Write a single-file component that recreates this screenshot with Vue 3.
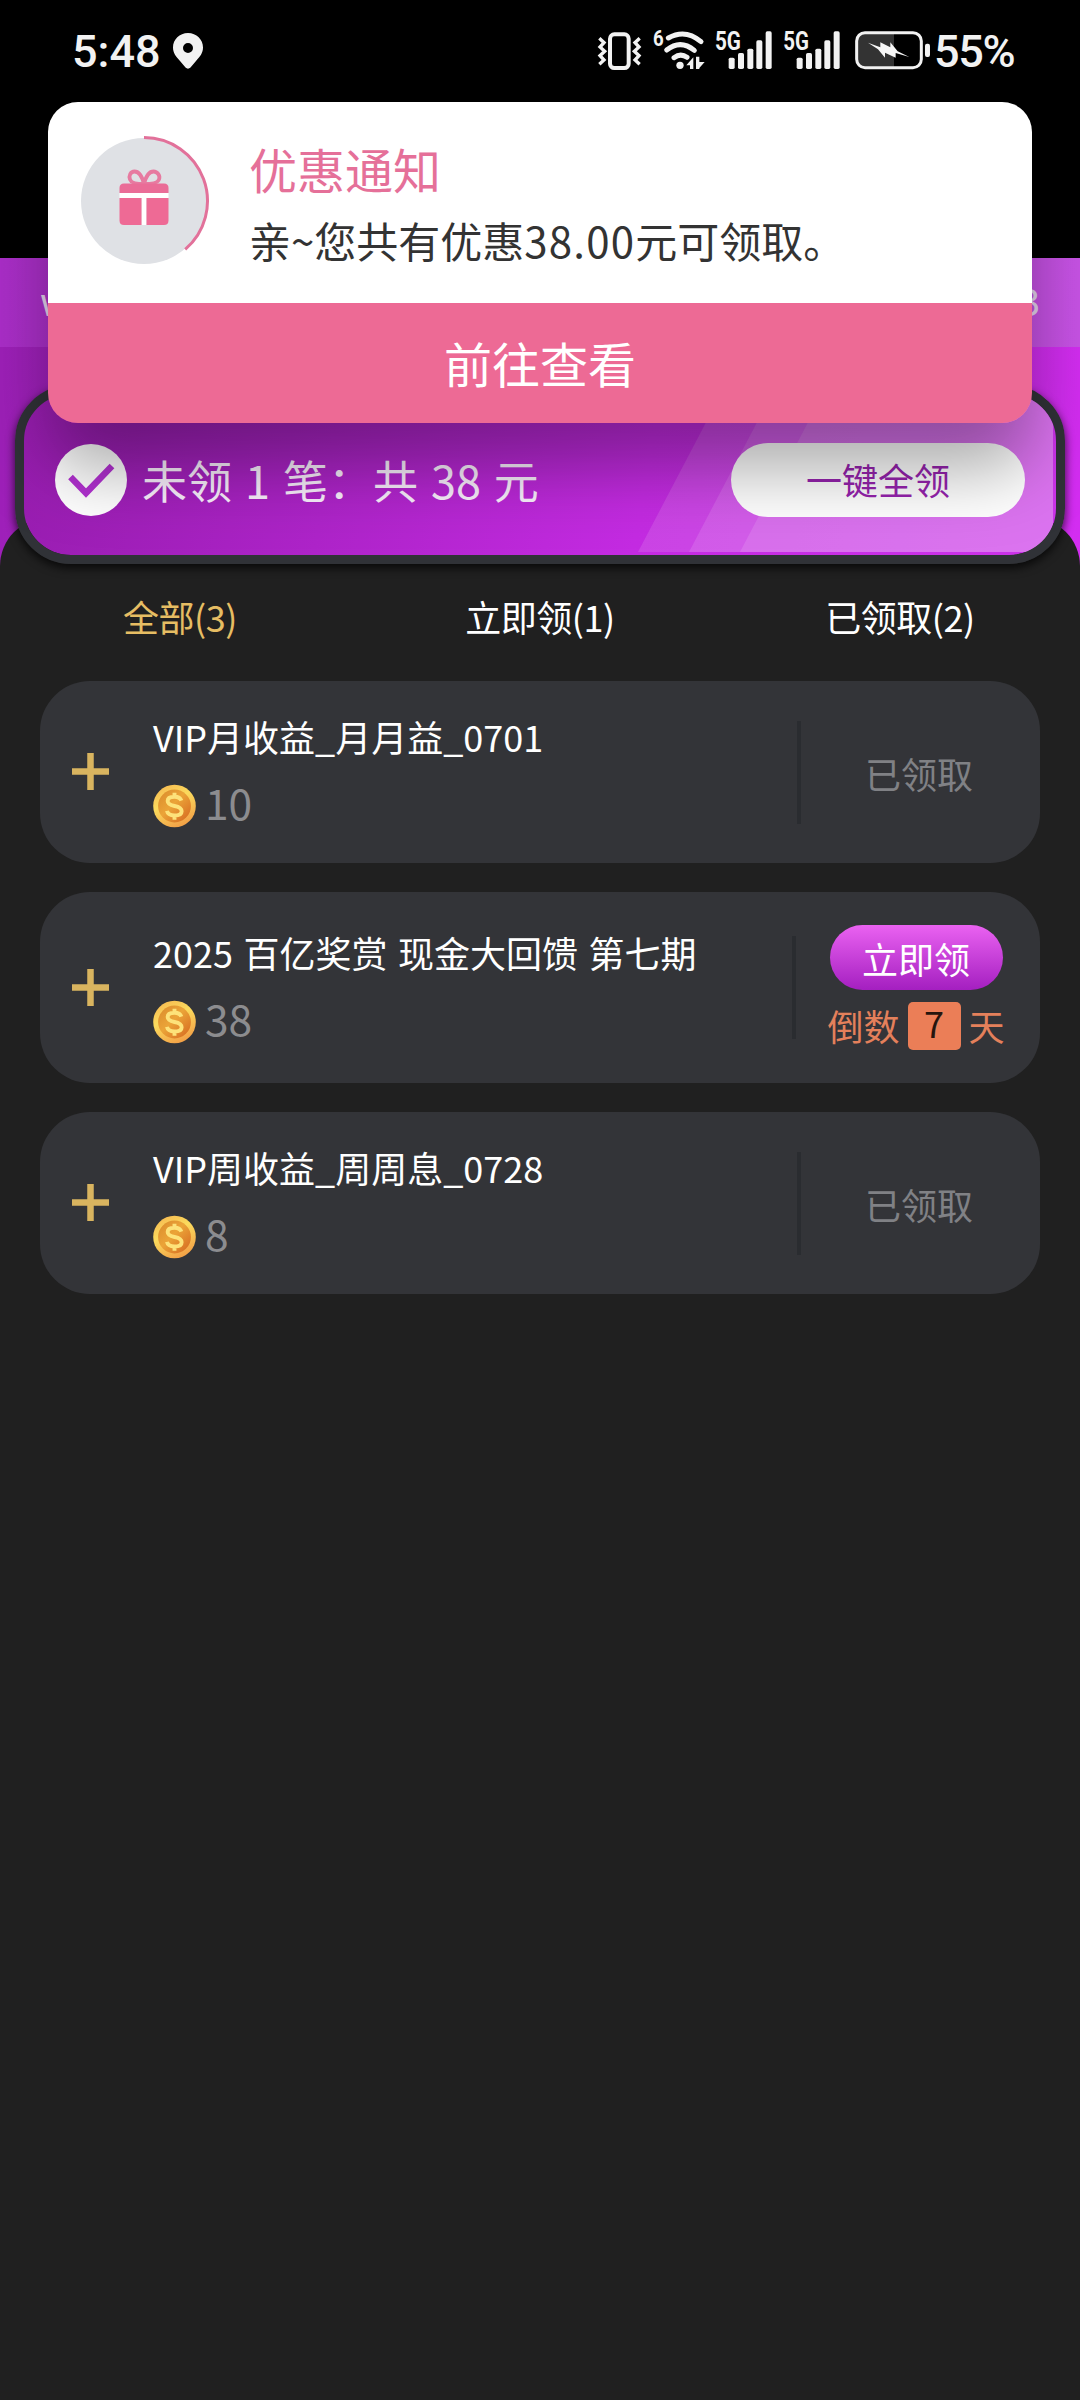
<script setup>
const tabs = [
  { label: '全部(3)', active: true },
  { label: '立即领(1)' },
  { label: '已领取(2)' },
]
const rewards = [
  { title: 'VIP月收益_月月益_0701', amount: 10, claimed: true },
  { title: '2025 百亿奖赏 现金大回馈 第七期', amount: 38, claimed: false, days: 7 },
  { title: 'VIP周收益_周周息_0728', amount: 8, claimed: true },
]
</script>

<template>
  <div class="page">
    <div class="status">
      <div class="clock">5:48</div>
      <svg class="pin" viewBox="0 0 30 36"><path fill="#f2f2f2" fill-rule="evenodd" d="M15 0C6.500 0 0 6.500 0 14.500C0 20 3 23.500 7 28L12.500 34.500Q15 36.800 17.500 34.500L23 28C27 23.500 30 20 30 14.500C30 6.500 23.500 0 15 0ZM15 10A5 5 0 1 1 15 20A5 5 0 1 1 15 10Z" /></svg>
      <svg class="sysicons" viewBox="50 55 1005 190">
        <g fill="none" stroke="#f2f2f2" stroke-width="12">
          <rect x="89" y="104" width="56" height="101" rx="13" />
          <path stroke-width="10" d="M57 116L71 129L59 142L73 155L59 168L71 181L57 194M178 116L164 129L176 142L162 155L176 168L164 181L178 194" />
          <path stroke-width="15" stroke-linecap="round" d="M264 115Q315 86 362 126M259 151Q300 118 342 152M281 174Q301 159 320 173" />
        </g>
        <g fill="#f2f2f2">
          <circle cx="299" cy="197" r="11" />
          <path d="M339 173V208H329V197H318ZM347 171V208H357V205L373 187H357V171Z" />
          <text class="net" x="218" y="139" font-size="64" textLength="32" lengthAdjust="spacingAndGlyphs">6</text>
          <text class="net" x="404" y="151" font-size="76" textLength="78" lengthAdjust="spacingAndGlyphs">5G</text>
          <text class="net" x="609" y="151" font-size="76" textLength="77" lengthAdjust="spacingAndGlyphs">5G</text>
          <g id="bars">
            <rect x="445" y="174" width="18" height="34" rx="5" />
            <rect x="473" y="160" width="18" height="48" rx="5" />
            <rect x="501" y="147" width="18" height="61" rx="5" />
            <rect x="528" y="122" width="18" height="86" rx="5" />
            <rect x="556" y="95" width="18" height="113" rx="5" />
          </g>
          <use href="#bars" x="204" />
        </g>
        <path fill="#333" d="M852 102H941V201H852Q831 201 831 180V123Q831 102 852 102Z" />
        <rect x="829" y="99" width="194" height="105" rx="25" fill="none" stroke="#f2f2f2" stroke-width="9" />
        <rect x="1034" y="132" width="15" height="40" rx="6" fill="#f2f2f2" />
        <path fill="#f7f7f7" d="M863 129L900 143V128L930 143V128L952 155L987 172L946 160V174L914 159V174L893 149Z" />
      </svg>
      <div class="percent">55%</div>
    </div>

    <div class="account"><span>w</span><span>3</span></div>

    <div class="hero">
      <div class="banner">
        <svg class="rays" viewBox="0 0 1032 162" preserveAspectRatio="none">
          <path d="M614 158L699 -4H1029V158Z" />
          <path d="M665 158L750 -4H1029V158Z" />
          <path d="M716 158L801 -4H1029V158Z" />
        </svg>
        <div class="check">
          <svg viewBox="0 0 72 72"><path d="M15.500 33L31 49L57 22" fill="none" stroke="#b331d2" stroke-width="6.500" /></svg>
        </div>
        <div class="summary">未领 1 笔：共 38 元</div>
        <button class="claim-all">一键全领</button>
      </div>
    </div>

    <main class="panel">
      <nav class="tabs">
        <div v-for="t in tabs" :key="t.label" class="tab" :class="{ active: t.active }">{{ t.label }}</div>
      </nav>
      <div class="list">
        <div v-for="r in rewards" :key="r.title" class="card" :class="{ open: !r.claimed }">
          <svg class="plus" viewBox="0 0 37 37"><path d="M0 18.500H37M18.500 0V37" stroke="#d9b45f" stroke-width="6.500" /></svg>
          <div class="info">
            <div class="title">{{ r.title }}</div>
            <div class="amount">
              <svg class="coin" viewBox="0 0 44 44">
                <defs>
                  <linearGradient id="rim" x1=".2" y1="0" x2=".7" y2="1"><stop offset="0" stop-color="#f6b951" /><stop offset=".4" stop-color="#fbdb5d" /><stop offset="1" stop-color="#f29d45" /></linearGradient>
                  <linearGradient id="face" x1="0" y1="0" x2="1" y2="1"><stop offset="0" stop-color="#d98a2b" /><stop offset=".45" stop-color="#eba438" /><stop offset="1" stop-color="#d4651f" /></linearGradient>
                </defs>
                <circle cx="22" cy="22" r="21.800" fill="url(#rim)" />
                <circle cx="22" cy="22" r="16.800" fill="url(#face)" />
                <path d="M29 16.500C28 13.500 25.500 12.500 22 12.500C17.500 12.500 15 14.300 15 17C15 20.500 18.500 21.300 22 22C26 22.800 29.300 23.800 29.300 27.300C29.300 30.200 26.500 31.700 22 31.700C18 31.700 15 30.300 14.300 27M22 8.500V12.500M22 31.500V36" fill="none" stroke="#fde27a" stroke-width="4" />
              </svg>
              <span>{{ r.amount }}</span>
            </div>
          </div>
          <div class="divider"></div>
          <div v-if="r.claimed" class="side done">已领取</div>
          <div v-else class="side">
            <button class="claim">立即领</button>
            <div class="countdown"><span>倒数</span><b>{{ r.days }}</b><span>天</span></div>
          </div>
        </div>
      </div>
    </main>

    <div class="popup">
      <div class="popup-body">
        <svg class="gift" viewBox="0 0 130 130">
          <circle cx="64" cy="66" r="63" fill="#dfe1e5" />
          <path d="M64 2.500A63.500 63.500 0 0 1 105.200 114.300" fill="none" stroke="#e2719a" stroke-width="3" />
          <path d="M64 49C62 41 59 36.500 54.500 36.500C50.500 36.500 48.500 41 50 44.500C51 47.500 54 49 64 49ZM64 49C66 41 69 36.500 73.500 36.500C77.500 36.500 80.500 41 79 44.500C78 47.500 74 49 64 49Z" fill="none" stroke="#e77aa0" stroke-width="3.800" />
          <path d="M39.500 58V53Q39.500 48.500 44 48.500H84Q88.500 48.500 88.500 53V58Z" fill="#ea6c97" />
          <path d="M39.500 58H88.500V63H66.500V90H61.500V63H39.500Z" fill="#fff" />
          <path d="M39.500 63H61.500V90H44Q39.500 90 39.500 85.500ZM66.500 63H88.500V85.500Q88.500 90 84 90H66.500Z" fill="#ee6a95" />
        </svg>
        <div class="popup-text">
          <div class="popup-title">优惠通知</div>
          <div class="popup-msg">亲~您共有优惠<span class="sum">38.00</span>元可领取。</div>
        </div>
      </div>
      <div class="popup-action">前往查看</div>
    </div>
  </div>
</template>

<style>
body { margin: 0; background: #202020; }
</style>

<style scoped>
.page {
  position: relative;
  width: 1080px;
  height: 2400px;
  overflow: hidden;
  background: #202020;
  color: #fff;
  font-family: "Noto Sans CJK SC", sans-serif;
  display: flex;
  flex-direction: column;
}
button { border: 0; padding: 0; font: inherit; }
.status {
  height: 258px;
  flex: none;
  background: #000;
  box-sizing: border-box;
  padding: 0 60px 0 72px;
  display: flex;
  align-items: flex-start;
  color: #f2f2f2;
  font-family: Roboto, sans-serif;
  font-weight: 500;
}
.clock, .percent { font-size: 45px; line-height: 104px; height: 104px; white-space: nowrap; }
.clock { width: 101px; }
.percent { letter-spacing: -1.400px; }
.pin { width: 30px; height: 36px; margin-top: 33px; }
.sysicons { width: 335px; height: 63.330px; margin-top: 18.330px; margin-left: 393.600px; margin-right: 2.500px; overflow: visible; }
.net { font-family: Roboto, sans-serif; font-weight: 700; }
.account {
  height: 89px;
  flex: none;
  box-sizing: border-box;
  display: flex;
  justify-content: space-between;
  align-items: center;
  padding: 0 40px 7px;
  font-size: 38px;
  color: #e6d5ee;
  background: linear-gradient(90deg, #ab2ec9, #c853e6);
}
.hero {
  height: 220px;
  flex: none;
  box-sizing: border-box;
  padding: 38px 15px 0;
  background: linear-gradient(90deg, #9e20b9, #d32df1);
}
.banner {
  position: relative;
  z-index: 2;
  height: 179px;
  box-sizing: border-box;
  border: 9px solid #303237;
  border-radius: 56px;
  background: linear-gradient(100deg, #981db0, #c42be2 60%, #cc33ea) padding-box;
  box-shadow: 0 4px 10px rgba(0, 0, 0, .75);
  display: flex;
  align-items: center;
  padding: 11px 31px 0;
  overflow: hidden;
}
.rays { position: absolute; inset: 0; width: 1032px; height: 162px; border-radius: 46px; }
.rays path { fill: rgba(255, 255, 255, .12); }
.check {
  position: relative;
  width: 72px;
  height: 72px;
  border-radius: 50%;
  background: #fff;
}
.check svg { display: block; width: 72px; height: 72px; }
.summary { position: relative; margin-left: 15px; padding-bottom: 1px; font-size: 45px; line-height: 66px; flex: 1; white-space: nowrap; word-spacing: 2.900px; color: #fbf0fe; }
.claim-all {
  position: relative;
  width: 294px;
  height: 74px;
  box-sizing: border-box;
  padding-bottom: 2px;
  border-radius: 37px;
  background: #fff;
  color: #9623ae;
  font-size: 36px;
  line-height: 70px;
}
.panel {
  flex: 1;
  margin-top: -49px;
  padding-top: 49px;
  background: #202020;
  border-radius: 48px 48px 0 0;
}
.tabs { display: flex; height: 100px; }
.tab { flex: 1; text-align: center; font-size: 36px; line-height: 98px; letter-spacing: -.500px; }
.tab.active { color: #e6bd63; }
.list { display: flex; flex-direction: column; gap: 29px; padding: 14px 40px; }
.card {
  height: 182px;
  box-sizing: border-box;
  border-radius: 50px;
  background: #333438;
  display: flex;
  align-items: center;
  padding-left: 32px;
}
.card.open { height: 191px; }
.plus { width: 37px; height: 37px; margin-bottom: 1px; }
.info { margin-left: 44px; flex: 1; display: flex; flex-direction: column; gap: 14px; }
.title { font-size: 36px; line-height: 50px; padding-bottom: 4px; white-space: nowrap; word-spacing: 2.500px; }
.amount { display: flex; align-items: center; height: 54px; color: #8c8c8f; font-size: 42.500px; line-height: 48px; }
.amount span { padding-bottom: 8px; }
.coin { width: 43px; height: 44px; margin-right: 9px; }
.divider { width: 4.500px; height: 103px; background: #2a2c30; }
.side { width: 236px; padding-right: 3px; display: flex; flex-direction: column; align-items: center; font-size: 36px; }
.open .side { width: 240px; padding-right: 4px; }
.side.done { color: #808185; padding-top: 2px; line-height: 54px; }
.claim {
  width: 173px;
  height: 65px;
  border-radius: 33px;
  background: linear-gradient(#ea62f1, #a41fc0);
  color: #fff;
  line-height: 64px;
}
.countdown { display: flex; align-items: center; margin-top: 12px; height: 48px; color: #e4805b; line-height: 45px; }
.countdown span { padding-bottom: 1px; }
.countdown b {
  width: 53px;
  height: 48px;
  margin: 0 8px;
  border-radius: 5px;
  background: #eb7e57;
  color: #26150e;
  font-weight: 400;
  text-align: center;
  line-height: 40px;
}
.popup {
  position: absolute;
  z-index: 5;
  left: 48px;
  top: 102px;
  width: 984px;
  height: 321px;
  border-radius: 30px;
  overflow: hidden;
  box-shadow: 0 46px 72px rgba(0, 0, 0, .34);
  display: flex;
  flex-direction: column;
}
.popup-body { height: 201px; background: #fff; display: flex; align-items: flex-start; padding-left: 32px; }
.gift { width: 130px; height: 130px; margin-top: 33px; }
.popup-text { margin: 30px 0 0 39px; display: flex; flex-direction: column; }
.popup-title { font-size: 48px; line-height: 72px; color: #e57099; }
.popup-msg { font-size: 42px; line-height: 71px; color: #333; white-space: nowrap; }
.sum { letter-spacing: 1.200px; }
.popup-action { flex: 1; background: #ed6a95; text-align: center; font-size: 48px; line-height: 119px; }
</style>
